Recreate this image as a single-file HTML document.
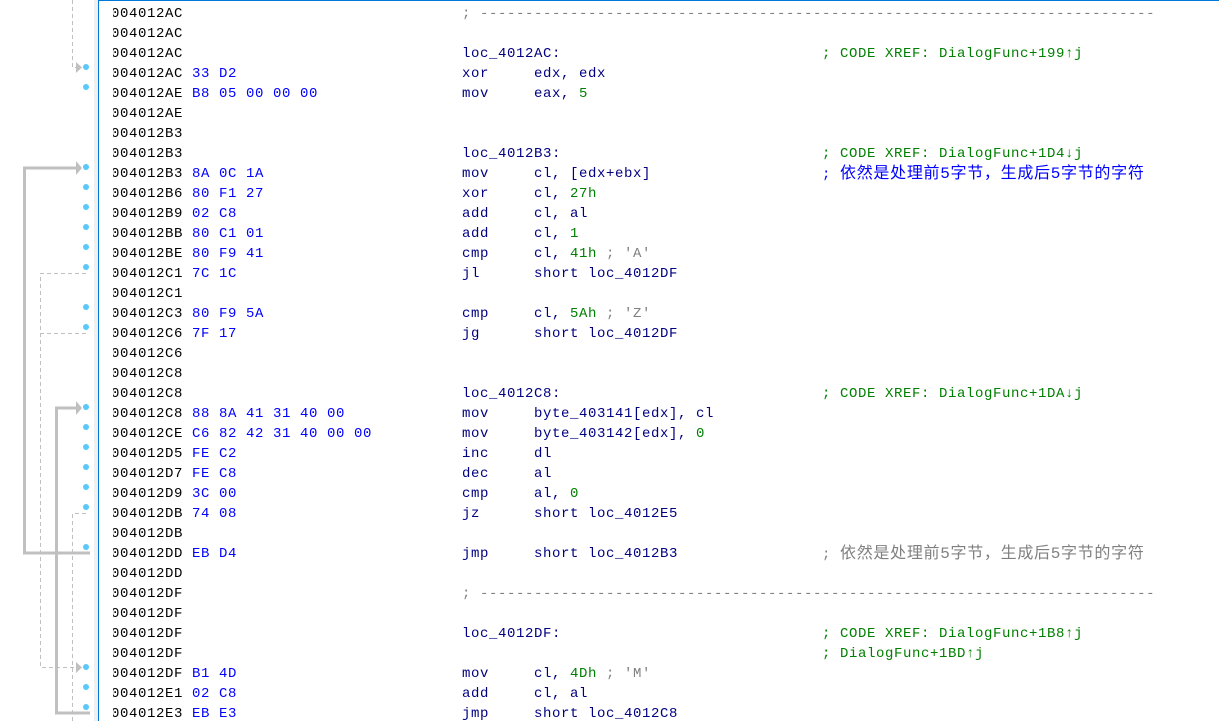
<!DOCTYPE html>
<html><head><meta charset="utf-8"><style>
html,body{margin:0;padding:0;background:#fff;width:1219px;height:721px;overflow:hidden;position:relative}
.r{position:absolute;left:0;height:20px;line-height:20px;width:1219px;font-family:"Liberation Mono","DejaVu Sans Mono",monospace;font-size:14px;letter-spacing:0.6px;white-space:pre}
.r span{position:absolute;top:0}
.a{left:111px;color:#000}
.b{left:192px;color:#0000ff}
.m{left:462px;color:#000080}
.o{left:534px;color:#000080}
.c{left:822px}
.g{color:#008000}
.gr{color:#808080}
.bl{color:#0000ff}
.cj{font-family:"Liberation Mono","Noto Sans CJK SC",monospace;font-size:16px;letter-spacing:0.7px}
#clip{position:absolute;left:99px;top:0;width:14px;height:721px;background:#fff;z-index:2}
#strip{position:absolute;left:94px;top:0;width:4px;height:721px;background:#f0f0f0;z-index:3}
#bline{position:absolute;left:98px;top:0;width:1px;height:721px;background:#0078d7;z-index:3}
#tline{position:absolute;left:98px;top:0;width:1121px;height:1px;background:#0078d7;z-index:3}
</style></head><body>
<div id="clip"></div><div id="strip"></div><div id="bline"></div><div id="tline"></div>
<svg width="94" height="721" style="position:absolute;left:0;top:0" xmlns="http://www.w3.org/2000/svg">
<g fill="#5ac8fa">
<circle cx="86" cy="67" r="3"/><circle cx="86" cy="87" r="3"/>
<circle cx="86" cy="167" r="3"/><circle cx="86" cy="187" r="3"/><circle cx="86" cy="207" r="3"/><circle cx="86" cy="227" r="3"/><circle cx="86" cy="247" r="3"/><circle cx="86" cy="267" r="3"/>
<circle cx="86" cy="307" r="3"/><circle cx="86" cy="327" r="3"/>
<circle cx="86" cy="407" r="3"/><circle cx="86" cy="427" r="3"/><circle cx="86" cy="447" r="3"/><circle cx="86" cy="467" r="3"/><circle cx="86" cy="487" r="3"/><circle cx="86" cy="507" r="3"/>
<circle cx="86" cy="547" r="3"/>
<circle cx="86" cy="667" r="3"/><circle cx="86" cy="687" r="3"/><circle cx="86" cy="707" r="3"/>
</g>
<g fill="none" stroke="#c0c0c0" stroke-width="1" stroke-dasharray="4 3">
<path d="M72.5 0 V67.5 H77"/>
<path d="M86 273.5 H40.5 V667.5 H77"/>
<path d="M86 333.5 H40.5"/>
<path d="M86 513.5 H72.5 V721"/>
</g>
<g fill="none" stroke="#c0c0c0" stroke-width="3">
<path d="M90 553 H24.5 V168 H77"/>
<path d="M90 713 H56.5 V408 H77"/>
</g>
<g fill="#c0c0c0">
<path d="M76 62 L82 67.5 L76 73Z"/>
<path d="M76 161 L82 168 L76 175Z"/>
<path d="M76 401 L82 408 L76 415Z"/>
<path d="M76 662 L82 667.5 L76 673Z"/>
</g>
</svg>

<div class="r" style="top:4px"><span class="a">004012AC</span><span class="m gr">; ---------------------------------------------------------------------------</span></div>
<div class="r" style="top:24px"><span class="a">004012AC</span></div>
<div class="r" style="top:44px"><span class="a">004012AC</span><span class="m">loc_4012AC:</span><span class="c g">; CODE XREF: DialogFunc+199↑j</span></div>
<div class="r" style="top:64px"><span class="a">004012AC</span><span class="b">33 D2</span><span class="m">xor</span><span class="o">edx, edx</span></div>
<div class="r" style="top:84px"><span class="a">004012AE</span><span class="b">B8 05 00 00 00</span><span class="m">mov</span><span class="o">eax, <i style="font-style:normal;color:#008000">5</i></span></div>
<div class="r" style="top:104px"><span class="a">004012AE</span></div>
<div class="r" style="top:124px"><span class="a">004012B3</span></div>
<div class="r" style="top:144px"><span class="a">004012B3</span><span class="m">loc_4012B3:</span><span class="c g">; CODE XREF: DialogFunc+1D4↓j</span></div>
<div class="r" style="top:164px"><span class="a">004012B3</span><span class="b">8A 0C 1A</span><span class="m">mov</span><span class="o">cl, [edx+ebx]</span><span class="c bl">; <span class="cj" style="position:static">依然是处理前5字节，生成后5字节的字符</span></span></div>
<div class="r" style="top:184px"><span class="a">004012B6</span><span class="b">80 F1 27</span><span class="m">xor</span><span class="o">cl, <i style="font-style:normal;color:#008000">27h</i></span></div>
<div class="r" style="top:204px"><span class="a">004012B9</span><span class="b">02 C8</span><span class="m">add</span><span class="o">cl, al</span></div>
<div class="r" style="top:224px"><span class="a">004012BB</span><span class="b">80 C1 01</span><span class="m">add</span><span class="o">cl, <i style="font-style:normal;color:#008000">1</i></span></div>
<div class="r" style="top:244px"><span class="a">004012BE</span><span class="b">80 F9 41</span><span class="m">cmp</span><span class="o">cl, <i style="font-style:normal;color:#008000">41h</i><i style="font-style:normal;color:#808080"> ; 'A'</i></span></div>
<div class="r" style="top:264px"><span class="a">004012C1</span><span class="b">7C 1C</span><span class="m">jl</span><span class="o">short loc_4012DF</span></div>
<div class="r" style="top:284px"><span class="a">004012C1</span></div>
<div class="r" style="top:304px"><span class="a">004012C3</span><span class="b">80 F9 5A</span><span class="m">cmp</span><span class="o">cl, <i style="font-style:normal;color:#008000">5Ah</i><i style="font-style:normal;color:#808080"> ; 'Z'</i></span></div>
<div class="r" style="top:324px"><span class="a">004012C6</span><span class="b">7F 17</span><span class="m">jg</span><span class="o">short loc_4012DF</span></div>
<div class="r" style="top:344px"><span class="a">004012C6</span></div>
<div class="r" style="top:364px"><span class="a">004012C8</span></div>
<div class="r" style="top:384px"><span class="a">004012C8</span><span class="m">loc_4012C8:</span><span class="c g">; CODE XREF: DialogFunc+1DA↓j</span></div>
<div class="r" style="top:404px"><span class="a">004012C8</span><span class="b">88 8A 41 31 40 00</span><span class="m">mov</span><span class="o">byte_403141[edx], cl</span></div>
<div class="r" style="top:424px"><span class="a">004012CE</span><span class="b">C6 82 42 31 40 00 00</span><span class="m">mov</span><span class="o">byte_403142[edx], <i style="font-style:normal;color:#008000">0</i></span></div>
<div class="r" style="top:444px"><span class="a">004012D5</span><span class="b">FE C2</span><span class="m">inc</span><span class="o">dl</span></div>
<div class="r" style="top:464px"><span class="a">004012D7</span><span class="b">FE C8</span><span class="m">dec</span><span class="o">al</span></div>
<div class="r" style="top:484px"><span class="a">004012D9</span><span class="b">3C 00</span><span class="m">cmp</span><span class="o">al, <i style="font-style:normal;color:#008000">0</i></span></div>
<div class="r" style="top:504px"><span class="a">004012DB</span><span class="b">74 08</span><span class="m">jz</span><span class="o">short loc_4012E5</span></div>
<div class="r" style="top:524px"><span class="a">004012DB</span></div>
<div class="r" style="top:544px"><span class="a">004012DD</span><span class="b">EB D4</span><span class="m">jmp</span><span class="o">short loc_4012B3</span><span class="c gr">; <span class="cj" style="position:static">依然是处理前5字节，生成后5字节的字符</span></span></div>
<div class="r" style="top:564px"><span class="a">004012DD</span></div>
<div class="r" style="top:584px"><span class="a">004012DF</span><span class="m gr">; ---------------------------------------------------------------------------</span></div>
<div class="r" style="top:604px"><span class="a">004012DF</span></div>
<div class="r" style="top:624px"><span class="a">004012DF</span><span class="m">loc_4012DF:</span><span class="c g">; CODE XREF: DialogFunc+1B8↑j</span></div>
<div class="r" style="top:644px"><span class="a">004012DF</span><span class="c g">; DialogFunc+1BD↑j</span></div>
<div class="r" style="top:664px"><span class="a">004012DF</span><span class="b">B1 4D</span><span class="m">mov</span><span class="o">cl, <i style="font-style:normal;color:#008000">4Dh</i><i style="font-style:normal;color:#808080"> ; 'M'</i></span></div>
<div class="r" style="top:684px"><span class="a">004012E1</span><span class="b">02 C8</span><span class="m">add</span><span class="o">cl, al</span></div>
<div class="r" style="top:704px"><span class="a">004012E3</span><span class="b">EB E3</span><span class="m">jmp</span><span class="o">short loc_4012C8</span></div>
</body></html>
